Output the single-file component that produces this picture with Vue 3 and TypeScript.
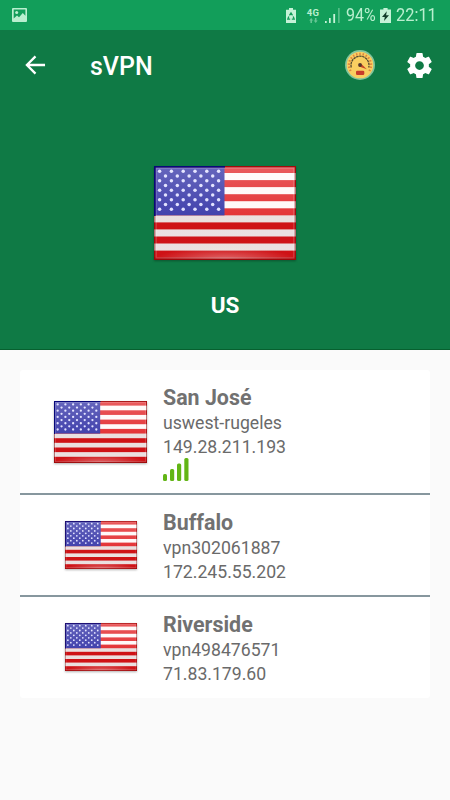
<script setup lang="ts">
interface Server {
  city: string
  host: string
  ip: string
  active: boolean
}

const servers: Server[] = [
  { city: 'San José', host: 'uswest-rugeles', ip: '149.28.211.193', active: true },
  { city: 'Buffalo', host: 'vpn302061887', ip: '172.245.55.202', active: false },
  { city: 'Riverside', host: 'vpn498476571', ip: '71.83.179.60', active: false },
]

interface Star {
  x: number
  y: number
}

// Nine rows alternating between six and five stars.
const stars: Star[] = []
for (let row = 0; row < 9; row++) {
  const odd = row % 2 === 1
  for (let col = 0; col < (odd ? 5 : 6); col++) {
    stars.push({ x: 5.6 + col * 11.8 + (odd ? 5.9 : 0), y: 5.2 + row * 4.75 })
  }
}
const redStripes = [0, 1, 2, 3, 4, 5, 6].map((i) => i * 14.1)
const gaugeTicks = Array.from({ length: 15 }, (_, i) => -119 + i * 17)
</script>

<template>
  <div class="screen">
    <svg class="defs" width="0" height="0" aria-hidden="true">
      <defs>
        <linearGradient id="gloss" x1="0" y1="0" x2="0" y2="1">
          <stop offset="0" stop-color="#fff" stop-opacity="0.3" />
          <stop offset="0.52" stop-color="#fff" stop-opacity="0.14" />
          <stop offset="0.53" stop-color="#300" stop-opacity="0.1" />
          <stop offset="1" stop-color="#300" stop-opacity="0.1" />
        </linearGradient>
        <radialGradient id="glow" cx="0.5" cy="1" r="0.5" gradientTransform="translate(0 0.75) scale(1 0.25)">
          <stop offset="0" stop-color="#fff" stop-opacity="0.35" />
          <stop offset="1" stop-color="#fff" stop-opacity="0" />
        </radialGradient>
        <symbol id="us-flag" viewBox="0 0 142 94" preserveAspectRatio="none">
          <rect width="142" height="94" fill="#fff8f8" />
          <rect v-for="y in redStripes" :key="y" x="0" :y="y" width="142" height="7" fill="#e01418" />
          <rect y="91" width="142" height="3" fill="#d01014" />
          <rect width="70.5" height="49.3" fill="#2424a0" />
          <circle v-for="(s, i) in stars" :key="i" :cx="s.x" :cy="s.y" r="1.75" fill="#dcdcff" />
          <rect x="1" y="1" width="140" height="92" fill="url(#gloss)" />
          <rect x="1" y="1" width="140" height="92" fill="url(#glow)" />
          <rect x="2" y="2" width="138" height="90" fill="none" stroke="#fff" stroke-opacity="0.2" stroke-width="1.5" />
          <rect x="0.7" y="0.7" width="140.6" height="92.6" fill="none" stroke="#700" stroke-opacity="0.55" stroke-width="1.5" />
          <path d="M.8 50V.8H71" fill="none" stroke="#08087a" stroke-width="1.6" />
        </symbol>
      </defs>
    </svg>

    <div class="statusbar">
      <svg class="picture" viewBox="0 0 15 14">
        <path fill-rule="evenodd" d="M1 0h13q1 0 1 1v12q0 1-1 1H1q-1 0-1-1V1q0-1 1-1zM1.7 1.6v9L5 7.5l2 1.7L10.8 5l2.6 2.7V1.6z" />
        <circle cx="4.7" cy="4.4" r="1.5" />
      </svg>
      <div class="indicators">
        <svg class="saver" viewBox="0 0 10 15">
          <path class="pale" d="M3 0h4v1.7h3V15H0V1.7h3z" />
          <path d="M3.5 7.3 5 5l1.5 2.3M7.2 8.6l1 2.6H5.8M4.2 11.2H1.8l1-2.6" fill="none" stroke="#129b58" stroke-width="1.3" />
        </svg>
        <div class="network">
          <span>4G</span>
          <svg viewBox="0 0 9 5"><path d="M2.2 0 4.2 2.4H3V5H1.4V2.4H.2zM6.7 5 4.7 2.6h1.2V0h1.6v2.6h1.2z" /></svg>
        </div>
        <svg class="signal" viewBox="0 0 15 15">
          <path class="pale" d="M0 13h1.7v2H0zM4 10h1.7v5H4zM8.3 6h1.8v9H8.3z" />
          <path class="dim" d="M13 0h1.7v15H13z" />
        </svg>
        <span class="percent">94%</span>
        <svg class="charge" viewBox="0 0 11 15">
          <path class="pale" d="M3.4 0h4.2v1.6H11V15H0V1.6h3.4z" />
          <path d="M6.8 3.2 2 9h2.8l-.8 4L9 7.3H6.1z" fill="#123d2a" />
        </svg>
        <span class="clock">22:11</span>
      </div>
    </div>

    <header class="hero">
      <div class="toolbar">
        <svg class="back" viewBox="0 0 22 20">
          <path d="M21 10H2M11 1 2 10l9 9" fill="none" stroke="#fff" stroke-width="2.4" />
        </svg>
        <h1>sVPN</h1>
        <svg class="gauge" viewBox="0 0 30 30">
          <circle cx="15" cy="15" r="15" fill="#82c49d" />
          <circle cx="15" cy="15" r="13.3" fill="#f9cf61" />
          <path
            v-for="a in gaugeTicks"
            :key="a"
            d="M15 2.8v2.2"
            :transform="`rotate(${a} 15 15)`"
            stroke="#df8540"
            stroke-width="1.5"
          />
          <path d="M6.3 17.5A9 9 0 1 1 23.7 17.5" fill="none" stroke="#54482f" stroke-width="1.3" stroke-dasharray="2.5 .6" />
          <path d="m14.2 16.4 7.6 2.8-5.9-5.7z" fill="#c84425" />
          <circle cx="15" cy="15" r="1.9" fill="#54372c" />
          <rect x="11" y="20.8" width="8.3" height="4.2" rx="1.3" fill="#c83b2b" />
        </svg>
        <svg class="gear" viewBox="2 2 20 20">
          <path
            fill="#fff"
            d="M19.43 12.98c.04-.32.07-.64.07-.98s-.03-.66-.07-.98l2.11-1.65c.19-.15.24-.42.12-.64l-2-3.46c-.12-.22-.39-.3-.61-.22l-2.49 1c-.52-.4-1.08-.73-1.69-.98l-.38-2.65A.49.49 0 0 0 14 2h-4c-.25 0-.46.18-.49.42l-.38 2.65c-.61.25-1.17.59-1.69.98l-2.49-1c-.23-.09-.49 0-.61.22l-2 3.46c-.13.22-.07.49.12.64l2.11 1.65c-.04.32-.07.65-.07.98s.03.66.07.98l-2.11 1.65c-.19.15-.24.42-.12.64l2 3.46c.12.22.39.3.61.22l2.49-1c.52.4 1.08.73 1.69.98l.38 2.65c.03.24.24.42.49.42h4c.25 0 .46-.18.49-.42l.38-2.65c.61-.25 1.17-.59 1.69-.98l2.49 1c.23.09.49 0 .61-.22l2-3.46c.12-.22.07-.49-.12-.64l-2.11-1.65zM12 15.5a3.5 3.5 0 1 1 0-7 3.5 3.5 0 0 1 0 7z"
          />
        </svg>
      </div>
      <svg class="flag hero-flag"><use href="#us-flag" /></svg>
      <h2>US</h2>
    </header>

    <main class="card">
      <div v-for="s in servers" :key="s.ip" class="server" :class="{ active: s.active }">
        <div class="flag-cell">
          <svg class="flag"><use href="#us-flag" /></svg>
        </div>
        <div class="details">
          <div class="city">{{ s.city }}</div>
          <div class="line">{{ s.host }}</div>
          <div class="line">{{ s.ip }}</div>
          <svg v-if="s.active" class="strength" viewBox="0 0 26 23">
            <rect x="0" y="16" width="4" height="7" rx="1.5" />
            <rect x="7" y="11" width="4.2" height="12" rx="1.5" />
            <rect x="14" y="5.5" width="4.2" height="17.5" rx="1.5" />
            <rect x="21.3" y="0" width="4.2" height="23" rx="1.5" />
          </svg>
        </div>
      </div>
    </main>
  </div>
</template>

<style>
body {
  background: #fafafa;
}
</style>

<style scoped>
.screen {
  width: 450px;
  height: 800px;
  overflow: hidden;
  background: #fafafa;
  font-family: Roboto, 'Liberation Sans', sans-serif;
}
svg {
  display: block;
  flex: none;
}
.defs {
  position: absolute;
}
.statusbar {
  box-sizing: border-box;
  height: 30px;
  padding: 0 14px 0 12px;
  display: flex;
  align-items: center;
  justify-content: space-between;
  background: #129e5a;
  color: #b9efcf;
  fill: #b9efcf;
}
.picture {
  width: 15px;
  height: 14px;
  margin-bottom: 1px;
}
.indicators {
  display: flex;
  align-items: center;
  font-size: 18px;
  line-height: 30px;
}
.pale {
  fill: #c5f2d7;
}
.dim {
  fill: #55bd88;
}
.saver {
  width: 10px;
  height: 15px;
  margin-right: 10px;
}
.network {
  width: 14px;
  display: flex;
  flex-direction: column;
  align-items: center;
  font-size: 9.5px;
  line-height: 9px;
  font-weight: 700;
  letter-spacing: 0.3px;
}
.network svg {
  width: 9px;
  height: 5px;
  margin-top: 1px;
  opacity: 0.5;
}
.signal {
  width: 15px;
  height: 15px;
  margin: 0 6px 0 5px;
}
.percent {
  width: 34px;
  white-space: nowrap;
  transform: scaleX(0.89);
  transform-origin: left;
}
.charge {
  width: 11px;
  height: 15px;
  margin-right: 5px;
}
.clock {
  width: 40px;
  transform: scaleX(0.91);
  transform-origin: left;
}
.hero {
  box-sizing: border-box;
  height: 320px;
  display: flex;
  flex-direction: column;
  align-items: center;
  background: #0f7a45;
  border-bottom: 1px solid #07602f;
  color: #fff;
}
.toolbar {
  box-sizing: border-box;
  width: 100%;
  height: 70px;
  padding: 0 18px 0 25px;
  display: flex;
  align-items: center;
}
.back {
  width: 21px;
  height: 20px;
}
h1 {
  margin: 3px 0 0 44px;
  flex: 1;
  font-size: 25px;
  line-height: 30px;
  font-weight: 500;
}
.gauge {
  width: 30px;
  height: 30px;
  margin-right: 32px;
}
.gear {
  width: 25px;
  height: 25px;
}
.flag {
  width: 72px;
  height: 48px;
  filter: drop-shadow(0 1px 1px rgba(0, 0, 0, 0.3));
}
.hero-flag {
  width: 142px;
  height: 94px;
  margin-top: 65.5px;
}
h2 {
  margin: 30px 0 0;
  font-size: 22.5px;
  line-height: 30px;
  font-weight: 700;
}
.card {
  width: 410px;
  margin: 20px auto 0;
  border-radius: 3px;
  background: #fff;
  color: #6a6a6a;
}
.server {
  box-sizing: border-box;
  height: 102px;
  display: flex;
  align-items: flex-start;
}
.server.active {
  height: 125px;
}
.server:last-child {
  height: 101px;
}
.server:not(:last-child) {
  border-bottom: 2px solid #87979e;
}
.flag-cell {
  width: 143px;
  height: 100%;
  padding: 0 0 1px 18px;
  box-sizing: border-box;
  display: flex;
  align-items: center;
  justify-content: center;
}
.active .flag-cell {
  padding-bottom: 0;
}
.active .flag {
  width: 93px;
  height: 62px;
}
.details {
  padding-top: 15px;
}
.city {
  font-size: 21.4px;
  line-height: 26px;
  font-weight: 700;
  color: #717171;
}
.line {
  font-size: 17.65px;
  line-height: 24px;
}
.strength {
  width: 26px;
  height: 23px;
  margin-top: -1px;
  fill: #62b515;
}
</style>
